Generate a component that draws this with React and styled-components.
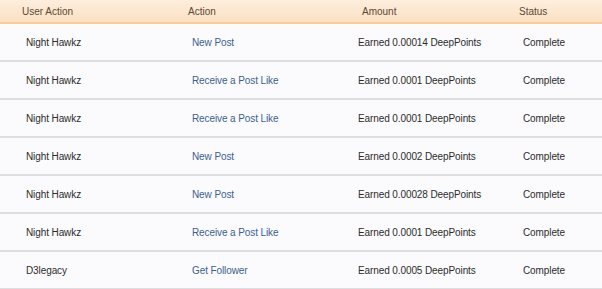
import styled, { createGlobalStyle } from "styled-components";

const Global = createGlobalStyle`
  body {
    margin: 0;
    background: #ffffff;
    font-family: "Liberation Sans", Arial, sans-serif;
  }
`;

const Table = styled.div`
  width: 602px;
  height: 289px;
  overflow: hidden;
  background: #fbfbfd;
`;

const cols = "166px 170px 161px 105px";

const HeaderRow = styled.div`
  display: grid;
  grid-template-columns: ${cols};
  height: 22px;
  align-items: center;
  background: linear-gradient(#fdeedd, #fbe0c2);
  border-bottom: 2px solid #f6cd99;
`;

const HeadCell = styled.div`
  padding-left: ${(p) => p.$pad}px;
  font-size: 10px;
  color: #5b4a37;
`;

const Row = styled.div`
  display: grid;
  grid-template-columns: ${cols};
  height: 36px;
  align-items: center;
  border-bottom: 2px solid #dedee0;
  background: #fbfbfd;
`;

const Cell = styled.div`
  padding-left: ${(p) => p.$pad}px;
  font-size: 10px;
  letter-spacing: -0.1px;
  color: ${(p) => (p.$link ? "#3b6190" : "#2c2c2c")};
`;

const heads = [
  ["User Action", 22],
  ["Action", 22],
  ["Amount", 26],
  ["Status", 22],
];

const rows = [
  ["Night Hawkz", "New Post", "Earned 0.00014 DeepPoints"],
  ["Night Hawkz", "Receive a Post Like", "Earned 0.0001 DeepPoints"],
  ["Night Hawkz", "Receive a Post Like", "Earned 0.0001 DeepPoints"],
  ["Night Hawkz", "New Post", "Earned 0.0002 DeepPoints"],
  ["Night Hawkz", "New Post", "Earned 0.00028 DeepPoints"],
  ["Night Hawkz", "Receive a Post Like", "Earned 0.0001 DeepPoints"],
  ["D3legacy", "Get Follower", "Earned 0.0005 DeepPoints"],
];

export default function App() {
  return (
    <>
      <Global />
      <Table>
        <HeaderRow>
          {heads.map(([t, p]) => (
            <HeadCell key={t} $pad={p}>{t}</HeadCell>
          ))}
        </HeaderRow>
        {rows.map((r, i) => (
          <Row key={i}>
            <Cell $pad={26}>{r[0]}</Cell>
            <Cell $pad={26} $link>{r[1]}</Cell>
            <Cell $pad={22}>{r[2]}</Cell>
            <Cell $pad={26}>Complete</Cell>
          </Row>
        ))}
      </Table>
    </>
  );
}
